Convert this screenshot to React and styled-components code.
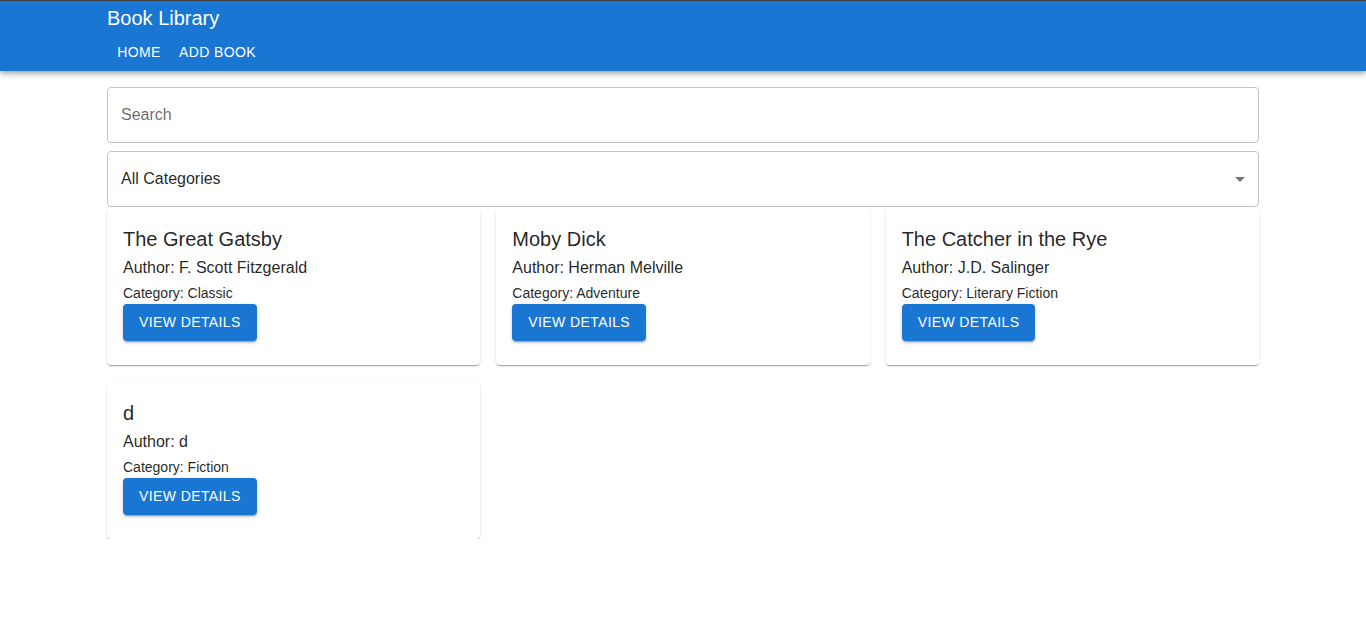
import React, { useState } from "react";
import styled, { createGlobalStyle } from "styled-components";

const GlobalStyle = createGlobalStyle`
  html, body {
    margin: 0;
    padding: 0;
    background: #fff;
    font-family: "Liberation Sans", Arial, Helvetica, sans-serif;
    color: rgba(0, 0, 0, 0.87);
  }
  * { box-sizing: border-box; }
`;

const AppBar = styled.header`
  background: #1976d2;
  color: #fff;
  border-top: 1px solid #3c3c3c;
  box-shadow: 0px 2px 4px -1px rgba(0, 0, 0, 0.2), 0px 4px 5px 0px rgba(0, 0, 0, 0.14),
    0px 1px 10px 0px rgba(0, 0, 0, 0.12);
  position: relative;
  z-index: 2;
`;

const Container = styled.div`
  max-width: 1200px;
  margin: 0 auto;
  padding: 0 24px;
`;

const Toolbar = styled(Container)`
  display: flex;
  flex-direction: column;
  align-items: flex-start;
  padding-top: 1px;
`;

const Brand = styled.div`
  font-size: 20px;
  line-height: 32px;
`;

const NavRow = styled.nav`
  display: flex;
`;

const NavButton = styled.button`
  background: none;
  border: 0;
  color: #fff;
  font-family: inherit;
  font-size: 14px;
  line-height: 24.5px;
  letter-spacing: 0.02857em;
  text-transform: uppercase;
  padding: 6px 8px;
  min-width: 64px;
  border-radius: 4px;
  cursor: pointer;
`;

const Main = styled(Container)`
  padding-top: 16px;
`;

const Field = styled.div`
  position: relative;
  height: 56px;
  border: 1px solid rgba(0, 0, 0, 0.23);
  border-radius: 4px;
  display: flex;
  align-items: center;
  margin-bottom: ${(p) => p.$mb || 0}px;
`;

const SearchInput = styled.input`
  border: 0;
  outline: none;
  background: transparent;
  width: 100%;
  height: 100%;
  padding: 0 13px;
  font-family: inherit;
  font-size: 16px;
  color: rgba(0, 0, 0, 0.87);

  &::placeholder {
    color: rgba(0, 0, 0, 0.6);
    opacity: 1;
  }
`;

const SelectValue = styled.div`
  flex: 1;
  padding: 0 13px;
  font-size: 16px;
  color: rgba(0, 0, 0, 0.87);
`;

const ArrowIcon = styled.svg`
  width: 24px;
  height: 24px;
  margin-right: 6px;
  fill: rgba(0, 0, 0, 0.54);
`;

const CardGrid = styled.div`
  display: grid;
  grid-template-columns: repeat(3, 1fr);
  column-gap: 16px;
  row-gap: 17px;
  margin-top: 1px;
`;

const Card = styled.div`
  background: #fff;
  border-radius: 4px;
  box-shadow: 0px 2px 1px -1px rgba(0, 0, 0, 0.2), 0px 1px 1px 0px rgba(0, 0, 0, 0.14),
    0px 1px 3px 0px rgba(0, 0, 0, 0.12);
  padding: 16px 16px 24px;
`;

const Title = styled.div`
  font-size: 20px;
  line-height: 31px;
`;

const Author = styled.div`
  font-size: 16px;
  line-height: 26px;
`;

const Category = styled.div`
  font-size: 14px;
  line-height: 20px;
  margin-top: 2px;
`;

const DetailsButton = styled.button`
  display: block;
  margin-top: 1px;
  background: #1976d2;
  color: #fff;
  border: 0;
  border-radius: 4px;
  padding: 6px 16px;
  font-family: inherit;
  font-size: 14px;
  line-height: 25px;
  letter-spacing: 0.02857em;
  text-transform: uppercase;
  box-shadow: 0px 3px 1px -2px rgba(0, 0, 0, 0.2), 0px 2px 2px 0px rgba(0, 0, 0, 0.14),
    0px 1px 5px 0px rgba(0, 0, 0, 0.12);
  cursor: pointer;
`;

const books = [
  { id: 1, title: "The Great Gatsby", author: "F. Scott Fitzgerald", category: "Classic" },
  { id: 2, title: "Moby Dick", author: "Herman Melville", category: "Adventure" },
  { id: 3, title: "The Catcher in the Rye", author: "J.D. Salinger", category: "Literary Fiction" },
  { id: 4, title: "d", author: "d", category: "Fiction" },
];

export default function App() {
  const [query, setQuery] = useState("");

  const shown = books.filter((b) =>
    b.title.toLowerCase().includes(query.toLowerCase())
  );

  return (
    <>
      <GlobalStyle />
      <AppBar>
        <Toolbar>
          <Brand>Book Library</Brand>
          <NavRow>
            <NavButton>Home</NavButton>
            <NavButton>Add Book</NavButton>
          </NavRow>
        </Toolbar>
      </AppBar>

      <Main>
        <Field $mb={8}>
          <SearchInput
            placeholder="Search"
            value={query}
            onChange={(e) => setQuery(e.target.value)}
          />
        </Field>
        <Field>
          <SelectValue>All Categories</SelectValue>
          <ArrowIcon viewBox="0 0 24 24">
            <path d="M7 10l5 5 5-5z" />
          </ArrowIcon>
        </Field>

        <CardGrid>
          {shown.map((book) => (
            <Card key={book.id}>
              <Title>{book.title}</Title>
              <Author>Author: {book.author}</Author>
              <Category>Category: {book.category}</Category>
              <DetailsButton>View Details</DetailsButton>
            </Card>
          ))}
        </CardGrid>
      </Main>
    </>
  );
}
